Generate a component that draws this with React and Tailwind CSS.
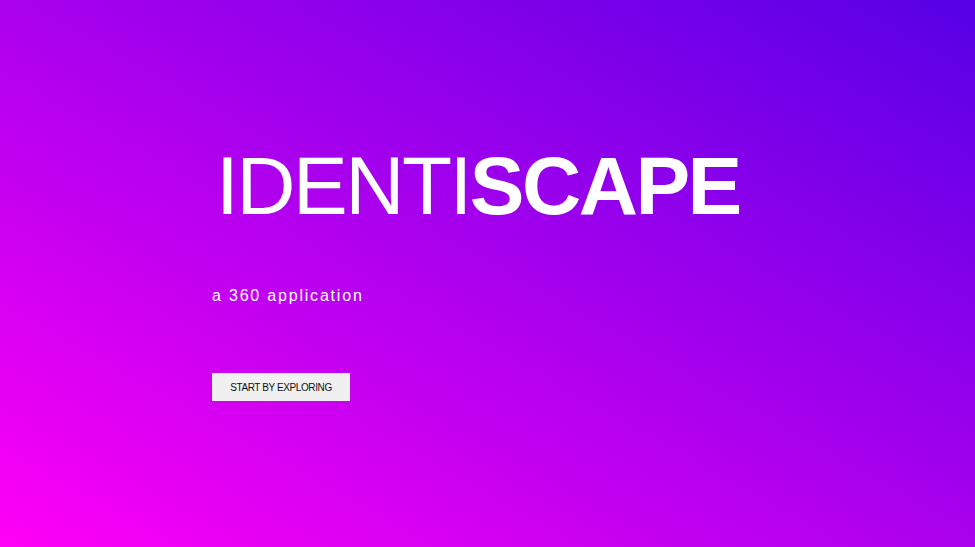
import React from 'react';

const App = () => {
  return (
    <div
      className="w-full h-screen overflow-hidden bg-linear-to-tr/srgb from-[#ff00f6] to-[#5600e6] text-white"
      style={{ fontFamily: '"Liberation Sans", Arial, sans-serif' }}
    >
      <div className="flex flex-col items-start pl-[212px] pt-[145px]">
        <h1 className="text-[82px] leading-none tracking-[-2.5px] ml-[4px]">
          <span className="font-light">IDENTI</span>
          <span className="font-bold">SCAPE</span>
        </h1>

        <p className="mt-[57px] text-[16px] tracking-[1.8px]">a 360 application</p>

        {/* CTA */}
        <button className="mt-[65px] w-[138px] h-[28px] bg-[#f0f0f0] text-[10px] tracking-[-0.4px] text-[#111]">
          START BY EXPLORING
        </button>
      </div>
    </div>
  );
};

export default App;
